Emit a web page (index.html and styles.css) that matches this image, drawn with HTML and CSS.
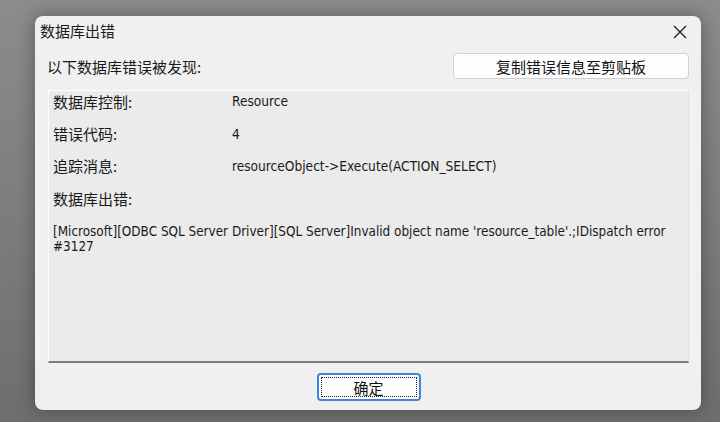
FILE: index.html
```html
<!DOCTYPE html>
<html lang="zh-CN">
<head>
    <meta charset="UTF-8">
    <meta name="viewport" content="width=device-width, initial-scale=1.0">
    <title>数据库出错</title>
    <link rel="stylesheet" href="styles.css">
</head>
<body>
<div class="dialog">
    <div class="titlebar">
        <span class="title">数据库出错</span>
        <span class="close">
            <svg width="14" height="14" viewBox="0 0 14 14">
                <path d="M1 1 L13 13 M13 1 L1 13" stroke="#1a1a1a" stroke-width="1.3" fill="none"/>
            </svg>
        </span>
    </div>
    <div class="toprow">
        <span class="intro">以下数据库错误被发现:</span>
        <button class="btn copy">复制错误信息至剪贴板</button>
    </div>
    <div class="panel">
        <div class="row"><span class="label">数据库控制:</span><span class="value">Resource</span></div>
        <div class="row"><span class="label">错误代码:</span><span class="value">4</span></div>
        <div class="row"><span class="label">追踪消息:</span><span class="value">resourceObject-&gt;Execute(ACTION_SELECT)</span></div>
        <div class="row"><span class="label">数据库出错:</span></div>
        <p class="message">[Microsoft][ODBC SQL Server Driver][SQL Server]Invalid object name 'resource_table'.;IDispatch error #3127</p>
    </div>
    <div class="footer">
        <button class="btn ok"><span class="focus">确定</span></button>
    </div>
</div>
</body>
</html>
```

FILE: styles.css
```css
body {
    margin: 0;
    width: 720px;
    height: 422px;
    overflow: hidden;
    background: linear-gradient(180deg, #8c8c8c, #6e6e6e);
    font-family: "Noto Sans CJK SC", sans-serif;
    color: #1a1a1a;
}

.dialog {
    margin: 16px 0 0 35px;
    width: 666px;
    height: 394px;
    background: #f0f0f0;
    border-radius: 8px;
    box-shadow: 0 0 18px rgba(0, 0, 0, 0.35);
    display: flex;
    flex-direction: column;
}

.titlebar {
    height: 30px;
    display: flex;
    align-items: center;
    justify-content: space-between;
    padding: 0 14px 0 5px;
}

.title {
    font-size: 15px;
    line-height: 30px;
}

.close {
    display: flex;
    margin-top: 1px;
}

.toprow {
    display: flex;
    align-items: center;
    justify-content: space-between;
    padding: 7px 12px 0 12px;
    height: 26px;
}

.intro {
    font-size: 15px;
}

.btn {
    font-family: "Noto Sans CJK SC", sans-serif;
    font-size: 15px;
    color: #111;
    background: #fdfdfd;
    border: 1px solid #d0d0d0;
    border-radius: 4px;
    padding: 0;
}

.copy {
    width: 236px;
    height: 26px;
}

/* 凹陷的信息框 */
.panel {
    margin: 11px 12px 0 13px;
    height: 270px;
    background: #ebebeb;
    border-top: 1px solid #fcfcfc;
    border-left: 1px solid #fcfcfc;
    border-right: 1px solid #e2e2e2;
    border-bottom: 2px solid #7d7d7d;
    padding: 0 4px;
}

.row {
    display: flex;
    height: 32.4px;
    align-items: center;
    font-size: 15px;
}

.row:first-child {
    margin-top: -6px;
}

.label {
    width: 179px;
}

.value {
    font-family: "DejaVu Sans Condensed", "Liberation Sans", sans-serif;
    font-size: 13.6px;
}

.message {
    margin: 9px 0 0;
    font-family: "DejaVu Sans Condensed", "Liberation Sans", sans-serif;
    font-size: 13.4px;
    line-height: 15px;
}

.footer {
    display: flex;
    justify-content: center;
    padding-top: 10px;
}

.ok {
    width: 104px;
    height: 28px;
    border: 2px solid #3c84e0;
    border-radius: 4px;
    padding: 2px;
    margin-left: 1px;
}

.focus {
    display: flex;
    align-items: center;
    justify-content: center;
    height: 100%;
    border: 1px dotted #222;
    box-sizing: border-box;
}
```
